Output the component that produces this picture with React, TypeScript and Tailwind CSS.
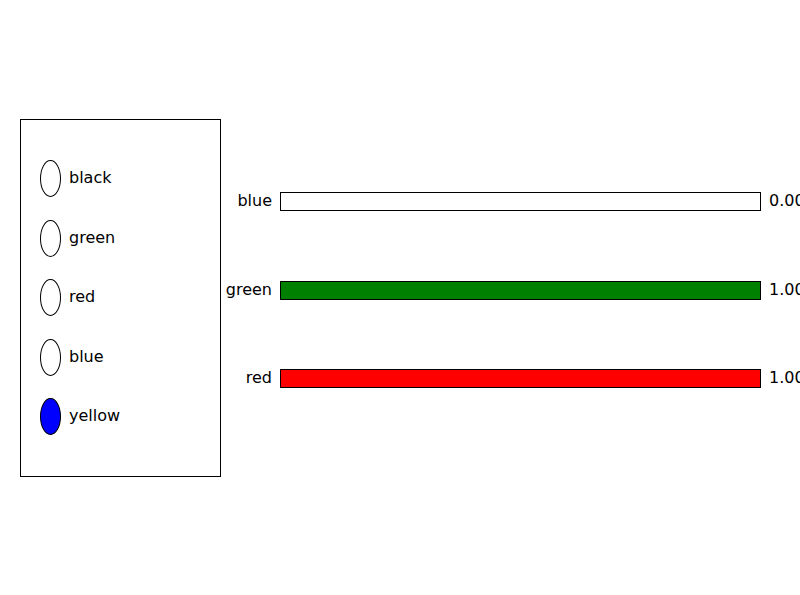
const options = ['black', 'green', 'red', 'blue', 'yellow']
const selected = 'yellow'

const sliders = [
  { label: 'blue', value: 0, fill: 'bg-white', mt: 'mt-0' },
  { label: 'green', value: 1, fill: 'bg-[#008000]', mt: 'mt-[70px]' },
  { label: 'red', value: 1, fill: 'bg-[#ff0000]', mt: 'mt-[69px]' },
]

export default function App() {
  return (
    <div
      className="w-[800px] h-[595px] bg-white overflow-hidden flex items-start text-black text-[16px] leading-none"
      style={{ fontFamily: '"DejaVu Sans", sans-serif' }}
    >
      {/* Radio buttons */}
      <div className="mt-[119px] ml-[20px] w-[201px] h-[358px] border border-black flex flex-col pt-[28.75px] shrink-0">
        {options.map(opt => (
          <div key={opt} className="h-[59.5px] flex items-center pl-[19px] gap-[8px]">
            <div
              className={
                'w-[21px] h-[37px] rounded-[50%] border border-black ' +
                (opt === selected ? 'bg-[#0000ff]' : 'bg-white')
              }
            />
            <span className="-mt-[1px]">{opt}</span>
          </div>
        ))}
      </div>

      {/* Sliders */}
      <div className="mt-[192px] flex flex-col">
        {sliders.map(s => (
          <div key={s.label} className={'flex items-center h-[19px] ' + s.mt}>
            <div className="w-[59px] pr-[8px] text-right -mt-[1px]">{s.label}</div>
            <div className={'w-[481px] h-[19px] border border-black ' + s.fill} />
            <div className="pl-[8px] whitespace-nowrap -mt-[1px]">{s.value.toFixed(2)}</div>
          </div>
        ))}
      </div>
    </div>
  )
}
